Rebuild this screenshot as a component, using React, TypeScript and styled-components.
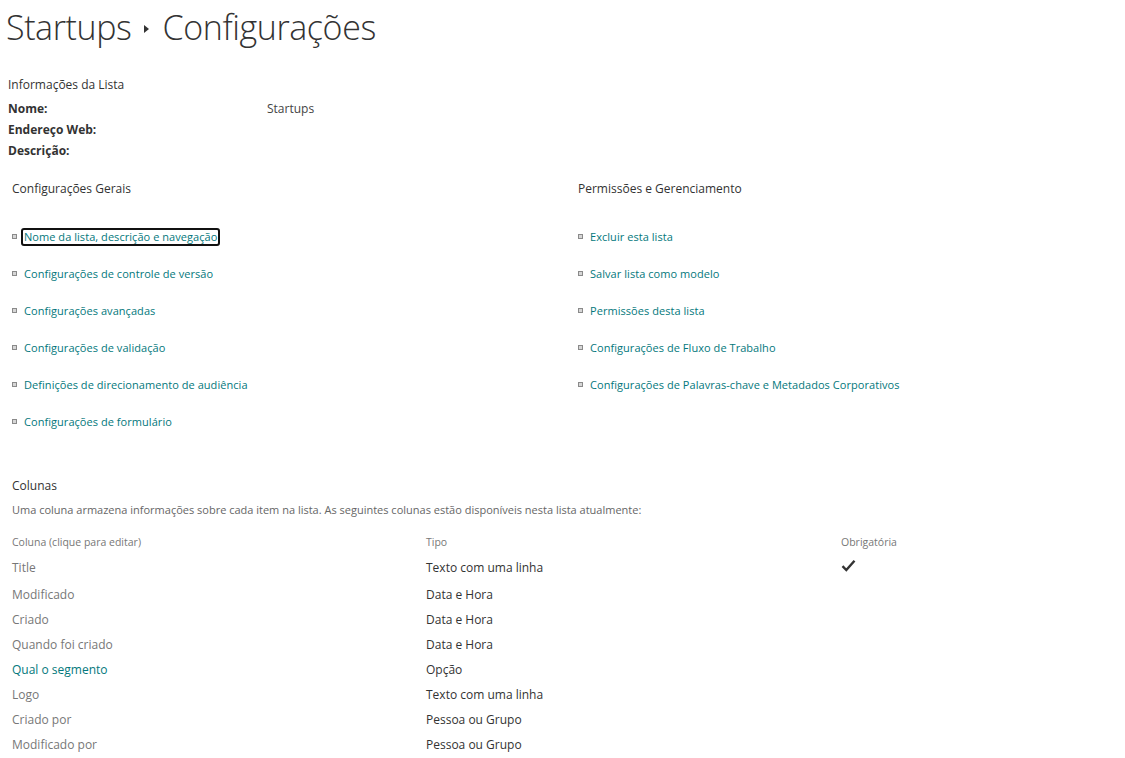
import React from "react";
import styled, { createGlobalStyle } from "styled-components";

const GlobalStyle = createGlobalStyle`
  html, body {
    margin: 0;
    padding: 0;
    background: #fff;
  }
  body {
    font-family: "Open Sans", "Liberation Sans", sans-serif;
    color: #444;
  }
`;

const LINK = "#03787c";

const Page = styled.div`
  width: 1125px;
  height: 758px;
  overflow: hidden;
  box-sizing: border-box;
  padding: 0 8px;
`;

const Title = styled.h1`
  margin: 0 0 0 -2px;
  padding-top: 2px;
  height: 50px;
  display: flex;
  align-items: center;
  gap: 13px;
  font-weight: 300;
  font-size: 34px;
  color: #333;
  letter-spacing: -0.4px;
`;

const Crumb = styled.span``;

const Arrow = styled.span`
  width: 0;
  height: 0;
  border-top: 4px solid transparent;
  border-bottom: 4px solid transparent;
  border-left: 5px solid #333;
  margin-top: 4px;
`;

const Info = styled.section`
  margin-top: 24px;
`;

const InfoHeading = styled.div`
  font-size: 12px;
  line-height: 17px;
  color: #333;
  height: 22px;
`;

const InfoRow = styled.div`
  display: grid;
  grid-template-columns: 259px 1fr;
  height: 21px;
  font-size: 12px;
  align-items: center;
`;

const InfoLabel = styled.span`
  font-weight: 700;
  color: #333;
`;

const InfoValue = styled.span`
  color: #444;
`;

const Settings = styled.div`
  display: grid;
  grid-template-columns: 566px 1fr;
  padding-left: 4px;
  margin-top: 19px;
`;

const SettingsColumn = styled.div`
  display: flex;
  flex-direction: column;
`;

const SettingsHeading = styled.div`
  font-size: 12px;
  color: #333;
  height: 38px;
`;

const LinkRow = styled.div`
  display: flex;
  align-items: center;
  height: 37px;
  font-size: 11px;
`;

const Bullet = styled.span`
  width: 3px;
  height: 3px;
  border: 1px solid #8a8a8a;
  background: #d6d6d6;
  margin-right: 6px;
  flex: none;
`;

const SettingsLink = styled.a<{ $focused?: boolean }>`
  color: ${LINK};
  text-decoration: none;
  padding: 0 1px;
  border: 2px solid ${(p) => (p.$focused ? "#111" : "transparent")};
  border-radius: 3px;
  margin-left: -2px;
  line-height: 14px;
  letter-spacing: 0.05px;
`;

const Columns = styled.section`
  padding-left: 4px;
  margin-top: 37px;
`;

const ColumnsHeading = styled.div`
  font-size: 12px;
  line-height: 17px;
  color: #333;
  height: 25px;
`;

const ColumnsDesc = styled.div`
  font-size: 11px;
  line-height: 16px;
  color: #666;
  height: 33px;
`;

const Table = styled.div`
  display: grid;
  grid-template-columns: 414px 415px 1fr;
`;

const HeadCell = styled.div`
  font-size: 10.5px;
  line-height: 15px;
  color: #777;
  height: 24px;
`;

const Cell = styled.div<{ $tall?: boolean }>`
  font-size: 12px;
  line-height: 17px;
  color: #555;
  height: ${(p) => (p.$tall ? 27 : 25)}px;
`;

const NameCell = styled(Cell)<{ $link?: boolean }>`
  color: ${(p) => (p.$link ? LINK : "#777")};
`;

const TypeCell = styled(Cell)`
  color: #333;
`;

const Check = () => (
  <svg width="15" height="13" viewBox="0 0 15 13">
    <path d="M1.5 7.2 L5.3 11 L13.5 1.8" fill="none" stroke="#333" strokeWidth="2.4" />
  </svg>
);

const general = [
  "Nome da lista, descrição e navegação",
  "Configurações de controle de versão",
  "Configurações avançadas",
  "Configurações de validação",
  "Definições de direcionamento de audiência",
  "Configurações de formulário",
];

const permissions = [
  "Excluir esta lista",
  "Salvar lista como modelo",
  "Permissões desta lista",
  "Configurações de Fluxo de Trabalho",
  "Configurações de Palavras-chave e Metadados Corporativos",
];

const columns = [
  { name: "Title", type: "Texto com uma linha", required: true },
  { name: "Modificado", type: "Data e Hora" },
  { name: "Criado", type: "Data e Hora" },
  { name: "Quando foi criado", type: "Data e Hora" },
  { name: "Qual o segmento", type: "Opção", link: true },
  { name: "Logo", type: "Texto com uma linha" },
  { name: "Criado por", type: "Pessoa ou Grupo" },
  { name: "Modificado por", type: "Pessoa ou Grupo" },
];

export default function App() {
  return (
    <Page>
      <GlobalStyle />
      <Title>
        <Crumb>Startups</Crumb>
        <Arrow />
        <Crumb>Configurações</Crumb>
      </Title>

      <Info>
        <InfoHeading>Informações da Lista</InfoHeading>
        <InfoRow>
          <InfoLabel>Nome:</InfoLabel>
          <InfoValue>Startups</InfoValue>
        </InfoRow>
        <InfoRow>
          <InfoLabel>Endereço Web:</InfoLabel>
          <InfoValue />
        </InfoRow>
        <InfoRow>
          <InfoLabel>Descrição:</InfoLabel>
          <InfoValue />
        </InfoRow>
      </Info>

      <Settings>
        <SettingsColumn>
          <SettingsHeading>Configurações Gerais</SettingsHeading>
          {general.map((t, i) => (
            <LinkRow key={t}>
              <Bullet />
              <SettingsLink href="#" $focused={i === 0}>{t}</SettingsLink>
            </LinkRow>
          ))}
        </SettingsColumn>
        <SettingsColumn>
          <SettingsHeading>Permissões e Gerenciamento</SettingsHeading>
          {permissions.map((t) => (
            <LinkRow key={t}>
              <Bullet />
              <SettingsLink href="#">{t}</SettingsLink>
            </LinkRow>
          ))}
        </SettingsColumn>
      </Settings>

      <Columns>
        <ColumnsHeading>Colunas</ColumnsHeading>
        <ColumnsDesc>
          Uma coluna armazena informações sobre cada item na lista. As seguintes colunas estão disponíveis nesta lista atualmente:
        </ColumnsDesc>
        <Table>
          <HeadCell>Coluna (clique para editar)</HeadCell>
          <HeadCell>Tipo</HeadCell>
          <HeadCell>Obrigatória</HeadCell>
          {columns.map((c, i) => (
            <React.Fragment key={c.name}>
              <NameCell $link={c.link} $tall={i === 0}>{c.name}</NameCell>
              <TypeCell $tall={i === 0}>{c.type}</TypeCell>
              <Cell $tall={i === 0}>{c.required ? <Check /> : null}</Cell>
            </React.Fragment>
          ))}
        </Table>
      </Columns>
    </Page>
  );
}
